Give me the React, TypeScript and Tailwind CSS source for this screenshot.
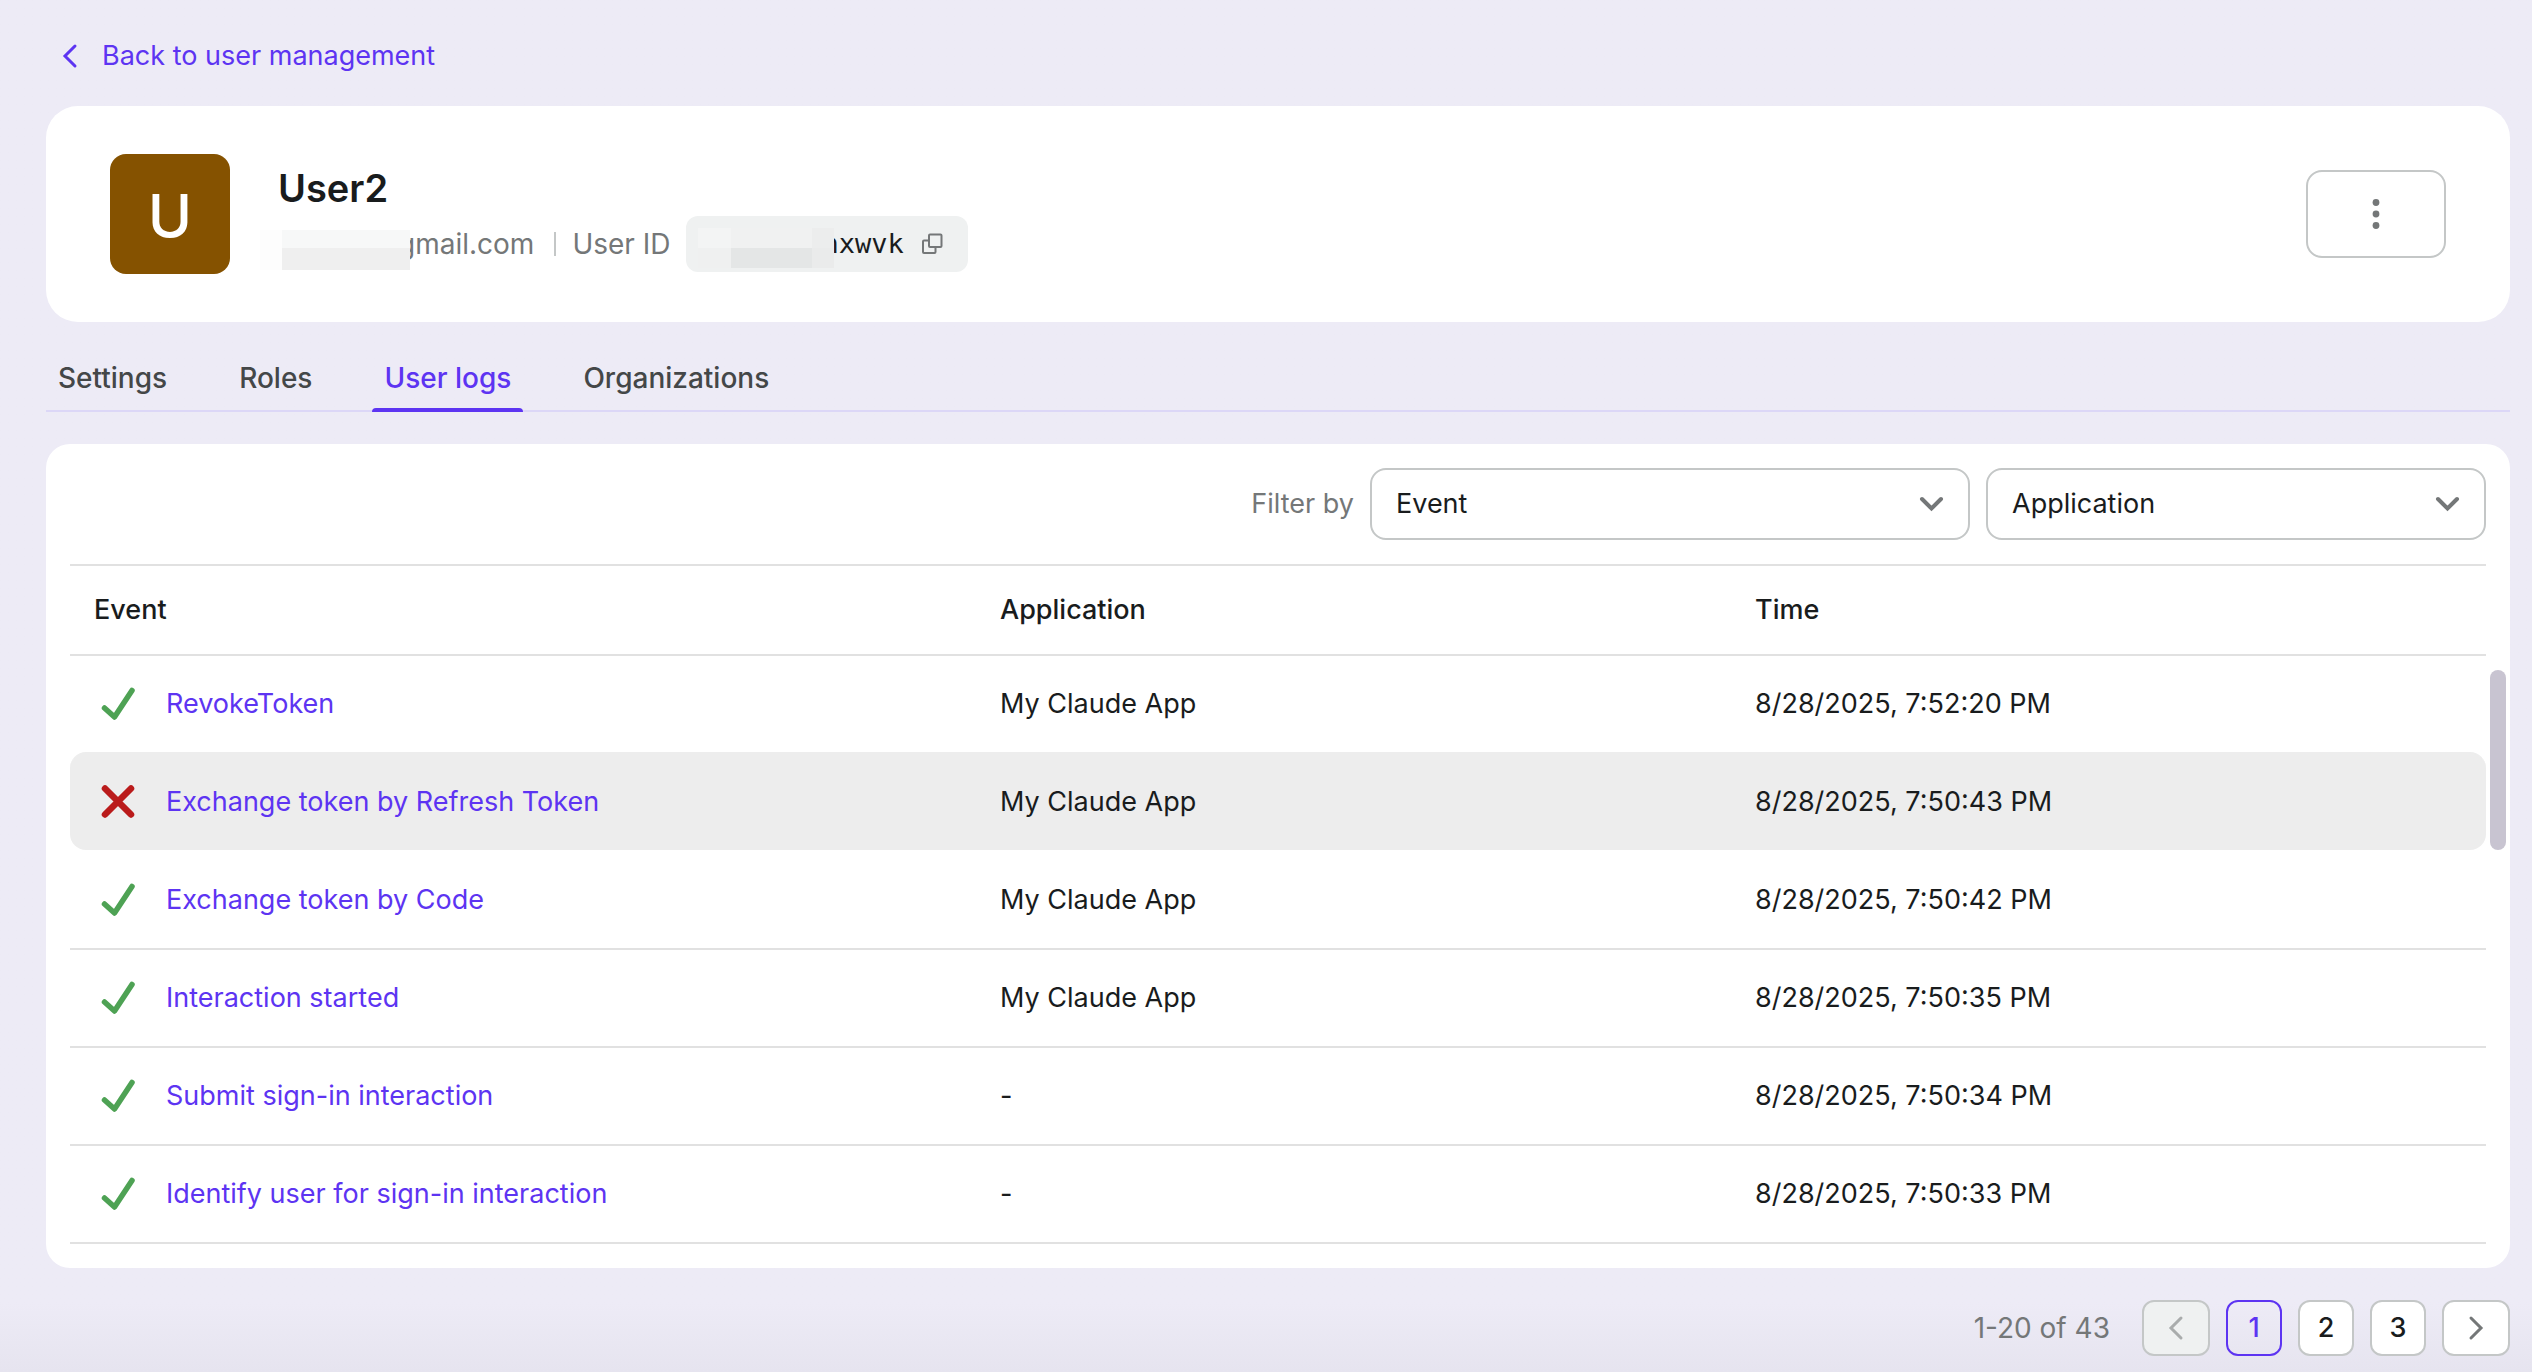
import React from 'react';

type Log = {
  event: string;
  application: string;
  time: string;
  success: boolean;
};

const tabs = ['Settings', 'Roles', 'User logs', 'Organizations'];
const activeTab = 'User logs';

const logs: Log[] = [
  { event: 'RevokeToken', application: 'My Claude App', time: '8/28/2025, 7:52:20 PM', success: true },
  { event: 'Exchange token by Refresh Token', application: 'My Claude App', time: '8/28/2025, 7:50:43 PM', success: false },
  { event: 'Exchange token by Code', application: 'My Claude App', time: '8/28/2025, 7:50:42 PM', success: true },
  { event: 'Interaction started', application: 'My Claude App', time: '8/28/2025, 7:50:35 PM', success: true },
  { event: 'Submit sign-in interaction', application: '-', time: '8/28/2025, 7:50:34 PM', success: true },
  { event: 'Identify user for sign-in interaction', application: '-', time: '8/28/2025, 7:50:33 PM', success: true }
];

const hoveredRow = 1;
const pages = [1, 2, 3];
const currentPage = 1;

const Chevron = ({ d, className, width = 3 }: { d: string; className: string; width?: number }) => (
  <svg viewBox="0 0 32 32" fill="none" stroke="currentColor" strokeWidth={width} strokeLinecap="round" className={className} aria-hidden="true">
    <path d={d} />
  </svg>
);

const CheckIcon = () => (
  <svg viewBox="0 0 48 48" fill="none" stroke="#4ea254" strokeWidth="5.500" strokeLinecap="round" strokeLinejoin="round" className="size-12 shrink-0" role="img" aria-label="Success">
    <path d="M10.500 28L20.500 37L38 10.500" />
  </svg>
);

const CrossIcon = () => (
  <svg viewBox="0 0 48 48" fill="none" stroke="#ba1b1b" strokeWidth="6.500" strokeLinecap="round" className="size-12 shrink-0" role="img" aria-label="Failed">
    <path d="M11 10.500L37 36.500M37 10.500L11 36.500" />
  </svg>
);

const CopyIcon = () => (
  <svg viewBox="0 0 24 24" fill="none" stroke="#747778" strokeWidth="2" strokeLinejoin="round" className="size-6" aria-hidden="true">
    <path d="M9 3.500a1 1 0 0 1 1-1h10.500a1 1 0 0 1 1 1v10.500a1 1 0 0 1-1 1H10a1 1 0 0 1-1-1z" />
    <path d="M9 8.500H4a1 1 0 0 0-1 1V20a1 1 0 0 0 1 1h10.500a1 1 0 0 0 1-1v-5" />
  </svg>
);

const FilterSelect = ({ label, className }: { label: string; className: string }) => (
  <div className={`relative ${className}`}>
    <select
      aria-label={label}
      className="h-[72px] w-full appearance-none rounded-2xl border-2 border-[#c4c7c7] bg-white pl-6 pr-16 text-[#191c1d]"
    >
      <option>{label}</option>
    </select>
    <Chevron d="M6 11L15.500 20.500L25 11" width={4} className="pointer-events-none absolute right-[22px] top-5 size-8 text-[#747778]" />
  </div>
);

const App = () => {
  return (
    <div className="min-h-screen bg-linear-to-b from-[#edebf6] from-95% to-[#e6e4ef] pl-[46px] pr-[22px] pb-4 pt-8 font-['Inter',sans-serif] text-[27px] leading-[44px] text-[#191c1d]">
      {/* Back link */}
      <div className="flex pt-[2px]">
        <a href="#" className="flex items-center gap-4 pl-2 text-[#5d34f2]">
          <Chevron d="M21 6L11 16L21 26" className="size-8" />
          Back to user management
        </a>
      </div>

      {/* User header */}
      <header className="mt-7 flex items-center gap-12 rounded-[32px] bg-white px-16 py-12">
        <div className="flex size-[120px] items-center justify-center rounded-2xl bg-[#855200] pt-1 text-[60px] font-medium text-white">
          U
        </div>
        <div className="flex-1">
          <h1 className="pt-1 text-[38px] leading-[56px] font-semibold">User2</h1>
          <div className="flex items-center text-[28px] text-[#747778]">
            {/* Masked part of the address */}
            <div className="relative z-10 mt-3 -ml-[18px] grid h-10 w-[150px] grid-cols-[22px_1fr] grid-rows-[18px_22px]">
              <span className="bg-[#fdfdfd]" />
              <span className="bg-[#f7f8f8]" />
              <span className="bg-[#fdfdfd]" />
              <span className="bg-[#efefef]" />
            </div>
            <span className="-ml-3">gmail.com</span>
            <span className="ml-5 mr-4 h-6 w-[2px] bg-[#c4c7c7]" />
            <span>User ID</span>
            <div className="ml-4 flex h-14 items-center rounded-xl bg-[#eff1f1] pl-3 pr-6">
              <div className="relative z-10 mt-2 grid h-10 w-[136px] grid-cols-[33px_81px_1fr] grid-rows-2">
                <span className="bg-[#f3f4f4]" />
                <span className="bg-[#f0f1f1]" />
                <span className="bg-[#eceded]" />
                <span className="bg-[#eff0f0]" />
                <span className="bg-[#e4e6e6]" />
                <span className="bg-[#eaebeb]" />
              </div>
              <span className="-ml-3 font-['DejaVu_Sans_Mono',monospace] text-[27px] text-[#191c1d]">nxwvk</span>
              <button type="button" aria-label="Copy user ID" className="ml-4">
                <CopyIcon />
              </button>
            </div>
          </div>
        </div>
        <button
          type="button"
          aria-label="More options"
          className="flex h-[88px] w-[140px] items-center justify-center rounded-2xl border-2 border-[#c4c7c7]"
        >
          <svg viewBox="0 0 40 40" fill="#747778" className="size-10" aria-hidden="true">
            <circle cx="20" cy="8.500" r="3.400" />
            <circle cx="20" cy="20" r="3.400" />
            <circle cx="20" cy="31.500" r="3.400" />
          </svg>
        </button>
      </header>

      {/* Tabs */}
      <nav className="mt-8 flex gap-12 border-b-2 border-[#dcd7f7] text-[28px] font-medium">
        {tabs.map((tab) => (
          <a
            key={tab}
            href="#"
            className={
              tab === activeTab
                ? 'relative h-14 px-3 pt-[2px] text-[#5d34f2]'
                : 'h-14 px-3 pt-[2px] text-[#444748]'
            }
          >
            {tab}
            {tab === activeTab && <span className="absolute inset-x-0 -bottom-[2px] h-1 rounded-t-sm bg-[#5d34f2]" />}
          </a>
        ))}
      </nav>

      {/* Logs */}
      <main className="relative mt-8 rounded-3xl bg-white p-6">
        <div className="flex items-center justify-end gap-4">
          <span className="text-[#747778]">Filter by</span>
          <FilterSelect label="Event" className="w-[600px]" />
          <FilterSelect label="Application" className="w-[500px]" />
        </div>
        <table className="mt-6 w-full table-fixed border-separate border-spacing-0 text-left">
          <thead>
            <tr className="h-[90px]">
              <th className="w-[37.5%] border-t-2 border-[#e1e1e1] px-6 font-medium">Event</th>
              <th className="border-t-2 border-[#e1e1e1] px-6 font-medium">Application</th>
              <th className="border-t-2 border-[#e1e1e1] px-6 font-medium">Time</th>
            </tr>
          </thead>
          <tbody>
            {logs.map((log, index) => {
              // The hovered row hides its own lines, above and below
              let cell = 'border-t-2 border-[#e1e1e1] px-6';
              if (index === hoveredRow) {
                cell = 'border-t-2 border-[#ededed] bg-[#ededed] px-6 first:rounded-l-2xl last:rounded-r-2xl';
              } else if (index === hoveredRow + 1) {
                cell = 'border-t-2 border-transparent px-6';
              } else if (index === logs.length - 1) {
                cell = 'border-y-2 border-[#e1e1e1] px-6';
              }
              return (
                <tr key={log.time} className={index === logs.length - 1 ? 'h-[100px]' : 'h-[98px]'}>
                  <td className={cell}>
                    <div className="flex items-center gap-6">
                      {log.success ? <CheckIcon /> : <CrossIcon />}
                      <a href="#" className="text-[#5d34f2]">{log.event}</a>
                    </div>
                  </td>
                  <td className={cell}>{log.application}</td>
                  <td className={cell}>{log.time}</td>
                </tr>
              );
            })}
          </tbody>
        </table>
        {/* Scrollbar thumb */}
        <div className="absolute right-1 top-[226px] h-[180px] w-4 rounded-full bg-[#c8c4d1]" />
      </main>

      {/* Pagination */}
      <footer className="mt-8 flex items-center justify-end gap-4">
        <span className="mr-4 text-[28px] text-[#747778]">1-20 of 43</span>
        <button
          type="button"
          disabled
          aria-label="Previous page"
          className="flex h-14 w-[68px] items-center justify-center rounded-xl border-2 border-[#c4c7c7] bg-[#eff1f1] text-[#a9acac]"
        >
          <Chevron d="M21 6L11 16L21 26" className="size-8" />
        </button>
        {pages.map((page) => (
          <button
            key={page}
            type="button"
            className={
              page === currentPage
                ? 'flex size-14 items-center justify-center rounded-xl border-2 border-[#5d34f2] font-medium text-[#5d34f2]'
                : 'flex size-14 items-center justify-center rounded-xl border-2 border-[#c4c7c7] bg-white font-medium'
            }
          >
            {page}
          </button>
        ))}
        <button
          type="button"
          aria-label="Next page"
          className="flex h-14 w-[68px] items-center justify-center rounded-xl border-2 border-[#c4c7c7] bg-white text-[#747778]"
        >
          <Chevron d="M11 6L21 16L11 26" className="size-8" />
        </button>
      </footer>
    </div>
  );
};

export default App;
